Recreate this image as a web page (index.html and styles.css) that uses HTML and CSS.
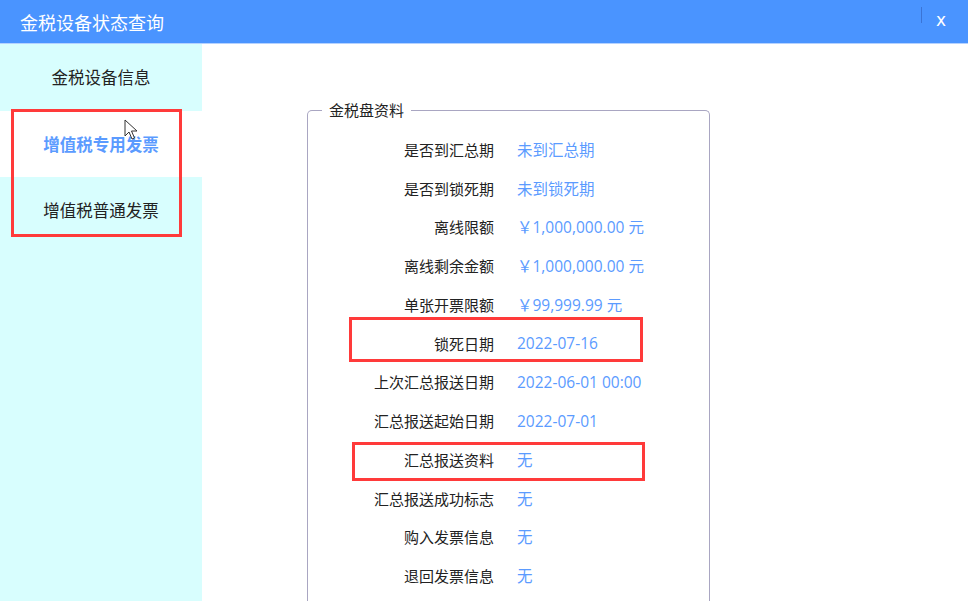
FILE: index.html
```html
<!DOCTYPE html>
<html lang="zh-CN">
<head>
    <meta charset="UTF-8">
    <meta name="viewport" content="width=device-width, initial-scale=1.0">
    <title>金税设备状态查询</title>
    <link rel="stylesheet" href="styles.css">
</head>
<body>
    <div class="dialog">
        <div class="titlebar">
            <span class="title">金税设备状态查询</span>
            <span class="divider"></span>
            <span class="close">x</span>
        </div>
        <div class="content">
            <div class="sidebar">
                <div class="nav-item">金税设备信息</div>
                <div class="nav-item active">增值税专用发票</div>
                <div class="nav-item">增值税普通发票</div>
                <div class="mark-box"></div>
                <svg class="cursor" width="14" height="22" viewBox="0 0 14 22">
                    <path d="M1 1 L1 17 L5 13 L8 20 L10.5 19 L7.5 12 L13 12 Z" fill="#fff" stroke="#333" stroke-width="1"/>
                </svg>
            </div>
            <div class="main">
                <fieldset class="panel">
                    <legend>金税盘资料</legend>
                    <div class="rows">
                        <div class="row"><span class="label">是否到汇总期</span><span class="value">未到汇总期</span></div>
                        <div class="row"><span class="label">是否到锁死期</span><span class="value">未到锁死期</span></div>
                        <div class="row"><span class="label">离线限额</span><span class="value">￥1,000,000.00 元</span></div>
                        <div class="row"><span class="label">离线剩余金额</span><span class="value">￥1,000,000.00 元</span></div>
                        <div class="row"><span class="label">单张开票限额</span><span class="value">￥99,999.99 元</span></div>
                        <div class="row marked-a"><span class="label">锁死日期</span><span class="value">2022-07-16</span></div>
                        <div class="row"><span class="label">上次汇总报送日期</span><span class="value">2022-06-01 00:00</span></div>
                        <div class="row"><span class="label">汇总报送起始日期</span><span class="value">2022-07-01</span></div>
                        <div class="row marked-b"><span class="label">汇总报送资料</span><span class="value">无</span></div>
                        <div class="row"><span class="label">汇总报送成功标志</span><span class="value">无</span></div>
                        <div class="row"><span class="label">购入发票信息</span><span class="value">无</span></div>
                        <div class="row"><span class="label">退回发票信息</span><span class="value">无</span></div>
                    </div>
                </fieldset>
            </div>
        </div>
    </div>
</body>
</html>
```

FILE: styles.css
```css
body {
    margin: 0;
    font-family: "Noto Sans CJK SC", "Noto Sans", sans-serif;
    background: #fff;
    overflow: hidden;
}
.dialog {
    width: 968px;
    height: 601px;
    display: flex;
    flex-direction: column;
    overflow: hidden;
}
.titlebar {
    height: 43px;
    background: #4a94ff;
    border-bottom: 1px solid #b5d2ff;
    display: flex;
    align-items: center;
    padding-left: 20px;
    color: #fff;
    flex-shrink: 0;
}
.title {
    font-size: 18px;
    flex: 1;
}
.divider {
    width: 1px;
    height: 16px;
    background: #3a74d6;
    margin-right: 14px;
    margin-top: -14px;
}
.close {
    font-family: "DejaVu Sans", sans-serif;
    font-size: 17px;
    width: 32px;
    margin-top: -4px;
}
.content {
    flex: 1;
    display: flex;
    min-height: 0;
}
.sidebar {
    width: 202px;
    background: #d8fefe;
    position: relative;
    flex-shrink: 0;
}
.nav-item {
    height: 66.5px;
    display: flex;
    align-items: center;
    justify-content: center;
    font-size: 16.5px;
    color: #222;
}
.nav-item.active {
    background: #fff;
    color: #5b9bff;
    font-weight: bold;
}
.mark-box {
    position: absolute;
    left: 11px;
    top: 65px;
    width: 165px;
    height: 122px;
    border: 3px solid #ff3a3a;
}
.cursor {
    position: absolute;
    left: 124px;
    top: 75px;
}
.main {
    flex: 1;
    padding-left: 105px;
}
.panel {
    width: 403px;
    box-sizing: border-box;
    height: 502px;
    margin: 56px 0 0;
    padding: 0;
    border: 1px solid #a9a6c2;
    border-bottom: none;
    border-radius: 5px 5px 0 0;
}
.panel legend {
    margin-left: 14px;
    padding: 0 7px;
    font-size: 15px;
    line-height: 20px;
    color: #222;
}
.rows {
    padding-top: 10px;
}
.row {
    height: 38.75px;
    display: grid;
    grid-template-columns: 186px 1fr;
    column-gap: 23px;
    align-items: center;
    font-size: 15px;
    position: relative;
}
.label {
    text-align: right;
    color: #222;
}
.value {
    font-family: "Open Sans", "Noto Sans CJK SC", sans-serif;
    font-size: 15.5px;
    color: #5b9bff;
}
.marked-a::after,
.marked-b::after {
    content: "";
    position: absolute;
    border: 3px solid #ff3a3a;
}
.marked-a::after {
    left: 41px;
    top: -7px;
    width: 288px;
    height: 39px;
}
.marked-b::after {
    left: 44px;
    top: 2px;
    width: 287px;
    height: 33px;
}
```
